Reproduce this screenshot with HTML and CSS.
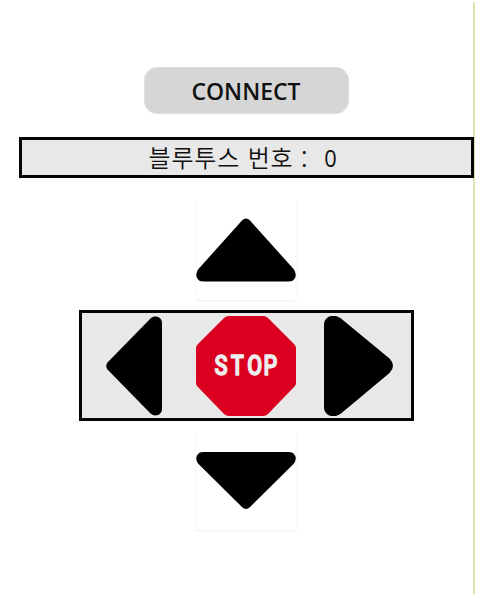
FILE: index.html
```
<!DOCTYPE html>
<html lang="ko">
<head>
<meta charset="utf-8">
<title>Bluetooth Controller</title>
<link rel="stylesheet" href="styles.css">
</head>
<body>
<main class="screen">
  <button class="connect" type="button"><span class="connect-label">CONNECT</span></button>
  <div class="status"><span class="status-label">블루투스 번호<span class="colon"> :</span></span><span class="status-value">0</span></div>
  <div class="tile tile-up">
    <svg class="icon" viewBox="0 0 100 100"><path d="M46 20.5Q50 16.500 54 20.500L98 69.500Q102 76 97 80.500Q95.500 81.500 92 81.500H8Q4.500 81.500 3 80.500Q-2 76 2 69.500Z"/></svg>
  </div>
  <div class="controls">
    <svg class="arrow-left" viewBox="0 0 56 100"><path d="M1.500 46.500Q-1 50 1.500 53.500L44.500 97.500C49 101.500 56 99 56 93V7C56 1 49-1.500 44.500 2.500Z"/></svg>
    <svg class="stop" viewBox="0 0 100 100">
      <path class="stop-sign" d="M33 0H67Q70 0 72 2L98.500 28.500Q100 30 100 32V67Q100 69 98.500 70.500L72 98Q70 100 67 100H33Q30 100 28 98L1.500 70.500Q0 69 0 67V32Q0 30 1.500 28.500L28 2Q30 0 33 0Z"/>
      <text class="stop-label" transform="scale(0.8 1)" y="59.500" x="23 43.500 64 84.500">STOP</text>
    </svg>
    <svg class="arrow-right" viewBox="0 0 69 100"><path d="M0 9C0 0 10-3 17 2.500L65.500 42.500Q72.500 49.500 65.500 57L17 97.500C10 103 0 100 0 91Z"/></svg>
  </div>
  <div class="tile tile-down">
    <svg class="icon" viewBox="0 0 100 100"><path d="M8 22H92Q95.500 22 97 23Q102 27.500 98 33.500L54 77Q50 81 46 77L2 33.500Q-2 27.500 3 23Q4.500 22 8 22Z"/></svg>
  </div>
</main>
</body>
</html>
```
FILE: styles.css
```
* { box-sizing: border-box; }
body {
  margin: 0;
  background: #fff;
  font-family: "Open Sans", "Noto Sans CJK KR", sans-serif;
  color: #111;
}
.screen {
  display: flex;
  flex-direction: column;
  align-items: center;
  width: 475px;
  height: 592px;
  margin-top: 2px;
  padding: 65px 0 0 19px;
  border-right: 2px solid #dbe4ae;
}
.connect {
  display: flex;
  align-items: center;
  justify-content: center;
  width: 205px;
  height: 47px;
  padding: 2px 0 0;
  border: 1px solid #dedede;
  border-radius: 13px;
  background: #d6d6d6;
  color: #111;
  font: 600 23px/45px "Open Sans", sans-serif;
}
.connect-label { white-space: nowrap; }
.status {
  display: flex;
  justify-content: center;
  align-items: center;
  gap: 16px;
  width: 455px;
  height: 41px;
  margin-top: 23px;
  padding-right: 6px;
  border: 3px solid #050505;
  background: #e8e8e8;
  font-size: 23px;
  line-height: 35px;
  white-space: nowrap;
}
.status-label {
  padding-bottom: 2px;
  font-family: "Noto Sans CJK KR", sans-serif;
  font-weight: 350;
  font-size: 24px;
  letter-spacing: 0.8px;
}
.colon { position: relative; top: 2px; }
.status-value { padding-top: 1px; transform: scaleX(0.95); }
.tile {
  width: 100px;
  height: 100px;
  margin-right: 1px;
  background: #fff;
  box-shadow: 0 1px 2px #eee;
}
.tile-up { margin-top: 22px; }
.icon { display: block; width: 100%; height: 100%; }
.controls {
  display: flex;
  justify-content: space-between;
  align-items: center;
  width: 335px;
  height: 111px;
  margin-top: 10px;
  padding: 0 18px 0 24px;
  border: 3px solid #050505;
  background: #e8e8e8;
}
.arrow-left { width: 56px; height: 100px; }
.stop { width: 100px; height: 100px; margin-left: 6px; }
.arrow-right { width: 69px; height: 100px; }
.stop-sign { fill: #db0020; }
.stop-label {
  font: 500 27px Roboto, sans-serif;
  fill: #eee;
  stroke: #eee;
  stroke-width: 1.4;
  stroke-linejoin: round;
}
.tile-down { margin-top: 9px; }
```
